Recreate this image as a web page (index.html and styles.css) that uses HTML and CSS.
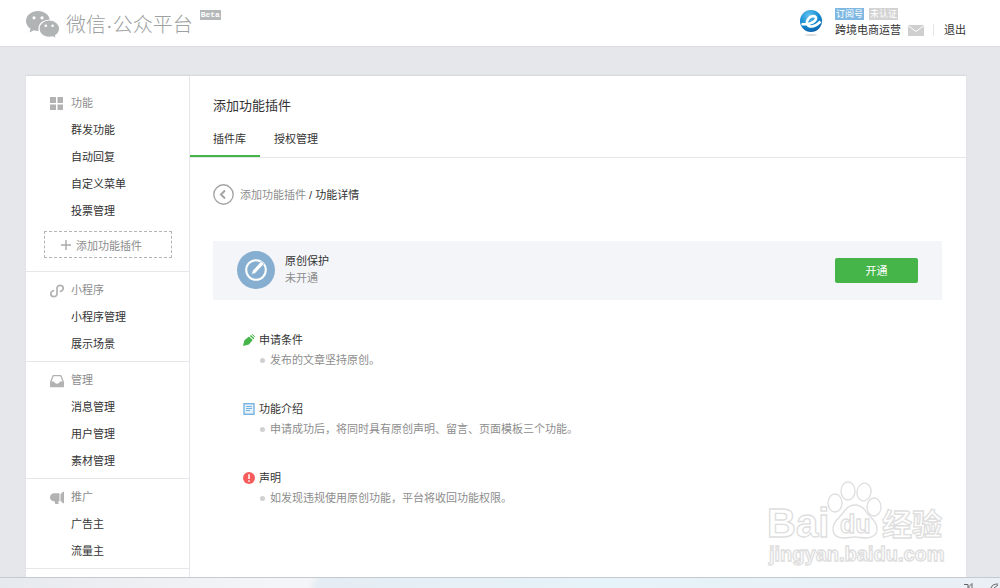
FILE: index.html
```html
<!DOCTYPE html>
<html lang="zh-CN">
<head>
    <meta charset="utf-8">
    <title>微信公众平台</title>
    <link rel="stylesheet" href="styles.css">
</head>
<body>
    <header class="header">
        <a class="logo" href="#">
            <svg class="logo-icon" width="34" height="28" viewBox="0 0 34 28">
                <path fill="#b0b4b5" d="M12 0C5.400 0 0 4.400 0 9.900c0 3.200 1.700 5.900 4.400 7.700L3.600 21.500l4.200-2.200c1.300.4 2.800.6 4.200.6 6.600 0 12-4.500 12-10S18.600 0 12 0z"/>
                <path fill="#b0b4b5" stroke="#fff" stroke-width="1.200" d="M23.300 9c-5.700 0-10.300 3.800-10.300 8.700s4.600 8.700 10.300 8.700c1.300 0 2.500-.2 3.600-.5l3.500 1.900-.8-3.300c2.400-1.600 4-4 4-6.800C33.600 12.800 29 9 23.300 9z"/>
                <circle cx="8" cy="6.800" r="1.600" fill="#fff"/>
                <circle cx="16" cy="6.800" r="1.600" fill="#fff"/>
                <circle cx="19.800" cy="14.700" r="1.300" fill="#fff"/>
                <circle cx="26.600" cy="14.700" r="1.300" fill="#fff"/>
            </svg>
            <span class="logo-text">微信·公众平台</span>
            <span class="beta">Beta</span>
        </a>
        <div class="account">
            <svg class="avatar" width="24" height="28" viewBox="0 0 24 28">
                <defs>
                    <radialGradient id="ball" cx="0.4" cy="0.25" r="0.8">
                        <stop offset="0" stop-color="#5fc4ee"/>
                        <stop offset="0.600" stop-color="#1489d0"/>
                        <stop offset="1" stop-color="#0a5ea8"/>
                    </radialGradient>
                </defs>
                <ellipse cx="12" cy="27" rx="6" ry="1" fill="#ddd"/>
                <circle cx="12" cy="13" r="11" fill="url(#ball)"/>
                <path fill="none" stroke="#fff" stroke-width="2.600" d="M2.500 16c5 1 13-1 14.500-5 .8-3.500-5-4-7.500-.5-3 4-1.500 8 3 8 4 0 6-2 9-5"/>
            </svg>
            <div class="account-info">
                <div class="badges">
                    <span class="badge badge-blue">订阅号</span>
                    <span class="badge">未认证</span>
                </div>
                <div class="account-row">
                    <a href="#">跨境电商运营</a>
                    <a class="mail" href="#" aria-label="消息">
                        <svg width="16" height="11" viewBox="0 0 16 11">
                            <rect width="16" height="11" fill="#cfcfcf"/>
                            <path d="M0 .5l8 6 8-6" fill="none" stroke="#fff" stroke-width="1"/>
                        </svg>
                    </a>
                    <a class="logout" href="#">退出</a>
                </div>
            </div>
        </div>
    </header>

    <div class="container">
        <nav class="sidebar">
            <div class="menu menu-first">
                <div class="menu-title">
                    <svg width="14" height="14" viewBox="0 0 14 14" fill="#b2b2b2"><path d="M0 0h6v6H0zM7.500 0h5.500v6H7.500zM0 7.500h6V13H0zM7.500 7.500h5.500V13H7.500z"/></svg>
                    功能
                </div>
                <a href="#">群发功能</a>
                <a href="#">自动回复</a>
                <a href="#">自定义菜单</a>
                <a href="#">投票管理</a>
                <button class="add-btn">
                    <svg width="10" height="10" viewBox="0 0 10 10"><path d="M5 0v10M0 5h10" stroke="#aaa" stroke-width="1.400"/></svg>
                    添加功能插件
                </button>
            </div>
            <div class="menu">
                <div class="menu-title">
                    <svg width="14" height="14" viewBox="0 0 14 14" fill="none" stroke="#b2b2b2" stroke-width="1.700" stroke-linecap="round"><path d="M3.500 6.600C1.700 7 .8 8.200.8 9.700c0 1.700 1.400 3 3.100 3S7 11.500 7 9.800V4.200C7 2.500 8.300 1.300 10.100 1.300s3.100 1.200 3.100 2.900c0 1.500-.9 2.700-2.700 3.100"/></svg>
                    小程序
                </div>
                <a href="#">小程序管理</a>
                <a href="#">展示场景</a>
            </div>
            <div class="menu">
                <div class="menu-title">
                    <svg width="14" height="14" viewBox="0 0 14 14"><path d="M3.200 1.600h7.600L13.300 8v4.500H.7V8z" fill="none" stroke="#b2b2b2" stroke-width="1.300" stroke-linejoin="round"/><path d="M.5 7.500h3.600c.3 1.400 1.500 2.200 2.900 2.200s2.600-.8 2.900-2.200h3.600V13H.5z" fill="#b2b2b2"/></svg>
                    管理
                </div>
                <a href="#">消息管理</a>
                <a href="#">用户管理</a>
                <a href="#">素材管理</a>
            </div>
            <div class="menu">
                <div class="menu-title">
                    <svg width="14" height="14" viewBox="0 0 14 14" fill="#b2b2b2"><path d="M9.500 2.300v8H8.300l.3 2.700H5.400l-1-2.700C1.700 10.300 0 8.700 0 6.400s1.700-4.100 4.300-4.100zM10.500 3.300L13 .8h1v11.500h-1l-2.500-2.500z"/></svg>
                    推广
                </div>
                <a href="#">广告主</a>
                <a href="#">流量主</a>
            </div>
        </nav>

        <main class="content">
            <h1>添加功能插件</h1>
            <div class="tabs">
                <a class="tab active" href="#">插件库</a>
                <a class="tab" href="#">授权管理</a>
            </div>

            <div class="detail">
                <div class="breadcrumb">
                    <a class="back" href="#" aria-label="返回">
                        <svg width="21" height="21" viewBox="0 0 21 21" fill="none" stroke="#a5a5a5"><circle cx="10.500" cy="10.500" r="9.700" stroke-width="1.400"/><path d="M12 6.500l-4 4 4 4" stroke-width="2"/></svg>
                    </a>
                    <span><a class="crumb" href="#">添加功能插件</a> / 功能详情</span>
                </div>

                <div class="plugin">
                    <svg width="38" height="38" viewBox="0 0 38 38">
                        <circle cx="19" cy="19" r="19" fill="#85aed0"/>
                        <circle cx="19" cy="19" r="9.800" fill="none" stroke="#fff" stroke-width="2"/>
                        <path d="M14.500 23.500l1-3.700 8.600-9.600 3 2.600-8.800 9.400z" fill="#fff" stroke="#85aed0" stroke-width=".6"/>
                    </svg>
                    <div class="plugin-info">
                        <h2>原创保护</h2>
                        <p>未开通</p>
                    </div>
                    <button class="open-btn">开通</button>
                </div>

                <section class="info">
                    <h3>
                        <svg width="12" height="12" viewBox="0 0 12 12" fill="#45b549"><path d="M0 12l1.400-5.800L6 2.500l3.700 3.600-3.800 4.500zM6.900 1.900l1-1 3.500 3.400-1 1zM8.700.3L9.500 0l2.500 2.400-.4.800z"/></svg>
                        申请条件
                    </h3>
                    <ul><li>发布的文章坚持原创。</li></ul>
                </section>
                <section class="info">
                    <h3>
                        <svg width="12" height="12" viewBox="0 0 12 12"><rect x="1" y=".7" width="10" height="10.600" fill="#e4f1fa" stroke="#78b4e0" stroke-width="1.400"/><path d="M3 3.500h6M3 5.500h6M3 7.500h4" stroke="#78b4e0"/></svg>
                        功能介绍
                    </h3>
                    <ul><li>申请成功后，将同时具有原创声明、留言、页面模板三个功能。</li></ul>
                </section>
                <section class="info">
                    <h3>
                        <svg width="12" height="12" viewBox="0 0 12 12"><circle cx="6" cy="6" r="6" fill="#f75c5c"/><path d="M6 2.300v4.700M6 8.200v1.500" stroke="#fff" stroke-width="1.500"/></svg>
                        声明
                    </h3>
                    <ul><li>如发现违规使用原创功能，平台将收回功能权限。</li></ul>
                </section>
            </div>
        </main>
    </div>

    <footer class="taskbar">
        <svg width="36" height="5" viewBox="0 0 36 5" fill="none" stroke="#666"><path d="M0 1.500h4v3.500M5 5V3.500l3-3v4.500M27 5c1-3 3-4 7-4M30 5l4-3"/></svg>
    </footer>

    <svg class="watermark" width="190" height="90" viewBox="0 0 190 90">
        <g fill="#fff" stroke="#dedede" stroke-width="1.300">
            <ellipse cx="70" cy="23" rx="7" ry="9"/>
            <ellipse cx="83" cy="11" rx="7" ry="9"/>
            <ellipse cx="99" cy="12" rx="7" ry="9" transform="rotate(10 99 12)"/>
            <ellipse cx="109" cy="27" rx="7" ry="9"/>
            <path d="M90 25c-5 0-9 3-12 8-3 4-10 8-10 16 0 7 5 9 11 9 4 0 7-1 11-1s7 1 11 1c6 0 11-3 11-9 0-8-7-12-10-16-3-5-7-8-12-8z"/>
            <text class="mark-latin" x="2" y="57">Bai</text>
            <text class="mark-du" x="75" y="53">du</text>
            <text class="mark-cjk" x="117" y="55">经验</text>
            <text class="mark-url" x="4" y="81">jingyan.baidu.com</text>
        </g>
    </svg>
</body>
</html>
```
FILE: styles.css
```css
* {
    box-sizing: border-box;
}
body {
    margin: 0;
    height: 100vh;
    display: flex;
    flex-direction: column;
    overflow: hidden;
    background-color: #e6e7eb;
    color: #333;
    font-family: "Liberation Sans", "Noto Sans CJK SC", sans-serif;
    font-size: 11px;
}
a {
    color: inherit;
    text-decoration: none;
}
h1, h2, h3, p, ul {
    margin: 0;
    padding: 0;
    font-weight: normal;
}
button {
    font-family: inherit;
    font-size: 11px;
    padding: 0;
    cursor: pointer;
}
svg {
    display: block;
    flex-shrink: 0;
}

/* header */
.header {
    display: flex;
    justify-content: space-between;
    height: 47px;
    flex-shrink: 0;
    padding: 0 34px 0 26px;
    background-color: #fff;
    border-bottom: 1px solid #dcdde0;
}
.logo {
    display: flex;
    align-items: center;
    color: #9da1a2;
}
.logo-icon {
    margin-top: 3px;
}
.logo-text {
    margin-left: 6px;
    font-family: "Liberation Sans", "Noto Sans CJK SC", sans-serif;
    font-size: 20px;
    font-weight: 300;
}
.beta {
    align-self: flex-start;
    margin: 10px 0 0 7px;
    padding: 0 1px;
    background-color: #b5b8b9;
    color: #fff;
    font-family: "Liberation Mono", monospace;
    font-size: 8px;
    font-weight: bold;
    line-height: 10px;
}
.account {
    display: flex;
    align-items: flex-start;
    gap: 12px;
    padding-top: 8px;
}
.badges {
    display: flex;
    gap: 5px;
}
.badge {
    padding: 0 1px;
    background-color: #d3d3d3;
    color: #fff;
    font-size: 9px;
    line-height: 12px;
}
.badge-blue {
    background-color: #7fb8e2;
}
.account-row {
    display: flex;
    align-items: center;
    line-height: 20px;
}
.mail {
    margin-left: 7px;
}
.logout {
    margin-left: 9px;
    padding-left: 10px;
    line-height: 12px;
    border-left: 1px solid #e7e7eb;
}

/* layout */
.container {
    display: flex;
    flex: 1;
    min-height: 0;
    margin: 28px 34px 0 26px;
    background-color: #fff;
    border-top: 1px solid #d9dadc;
    box-shadow: 0 0 1px #cfd0d3;
    overflow: hidden;
}
.sidebar {
    width: 164px;
    flex-shrink: 0;
    border-right: 1px solid #e7e7eb;
}
.menu {
    padding: 5px 0 3px;
    border-bottom: 1px solid #e7e7eb;
    line-height: 27px;
}
.menu-first {
    padding: 14px 0 13px;
}
.menu a {
    display: block;
    padding-left: 45px;
}
.menu-title {
    display: flex;
    align-items: center;
    gap: 7px;
    padding-left: 24px;
    color: #8d8d8d;
}
.add-btn {
    display: flex;
    align-items: center;
    gap: 5px;
    width: 128px;
    height: 27px;
    margin: 6px 0 0 18px;
    padding-left: 16px;
    background-color: #fff;
    border: 1px dashed #b5b5b5;
    color: #8d8d8d;
}

/* content */
.content {
    flex: 1;
}
h1 {
    padding: 20px 23px 0;
    font-size: 13px;
    line-height: 20px;
}
.tabs {
    display: flex;
    margin-top: 7px;
    border-bottom: 1px solid #e7e7eb;
}
.tab {
    padding: 0 14px;
    line-height: 32px;
    border-bottom: 2px solid transparent;
}
.tab.active {
    padding-left: 23px;
    border-color: #45b549;
}
.detail {
    padding: 26px 24px 0 23px;
}
.breadcrumb {
    display: flex;
    align-items: center;
    gap: 6px;
    line-height: 20px;
}
.crumb {
    color: #8d8d8d;
}
.plugin {
    display: flex;
    align-items: center;
    margin: 36px 0 30px;
    padding: 10px 24px 11px;
    background-color: #f4f5f9;
}
.plugin-info {
    margin-left: 10px;
    line-height: 17px;
}
.plugin-info h2 {
    font-size: 11px;
}
.plugin-info p {
    color: #8d8d8d;
}
.open-btn {
    width: 83px;
    height: 25px;
    margin-left: auto;
    background-color: #45b549;
    border: none;
    border-radius: 2px;
    color: #fff;
}
.info {
    margin-bottom: 29px;
    padding-left: 30px;
    line-height: 20px;
}
.info h3 {
    display: flex;
    align-items: center;
    gap: 4px;
    font-size: 11px;
}
.info ul {
    padding-left: 17px;
    color: #8d8d8d;
    list-style: none;
}
.info li {
    display: flex;
    align-items: center;
    gap: 5px;
}
.info li::before {
    content: "";
    width: 5px;
    height: 5px;
    border-radius: 50%;
    background-color: #d0d0d0;
}

/* bottom edge of the desktop */
.taskbar {
    display: flex;
    justify-content: flex-end;
    align-items: flex-end;
    flex-shrink: 0;
    height: 11px;
    border-top: 1px solid #c3cbd0;
    background: linear-gradient(115deg, #e6e9ee 0%, #f3f5f8 28%, #f3f5f8 31%, #e5ecf3 32%, #e6f3f8 60%, #e9eff5 100%);
}

.watermark {
    position: absolute;
    right: 45px;
    bottom: 18px;
}
.mark-latin {
    font: bold 40px "Liberation Sans", sans-serif;
}
.mark-du {
    font: bold 25px "Liberation Sans", sans-serif;
}
.mark-cjk {
    font: bold 30px "Noto Sans CJK SC", sans-serif;
}
.mark-url {
    font: bold 20px "Liberation Sans", sans-serif;
}
```
